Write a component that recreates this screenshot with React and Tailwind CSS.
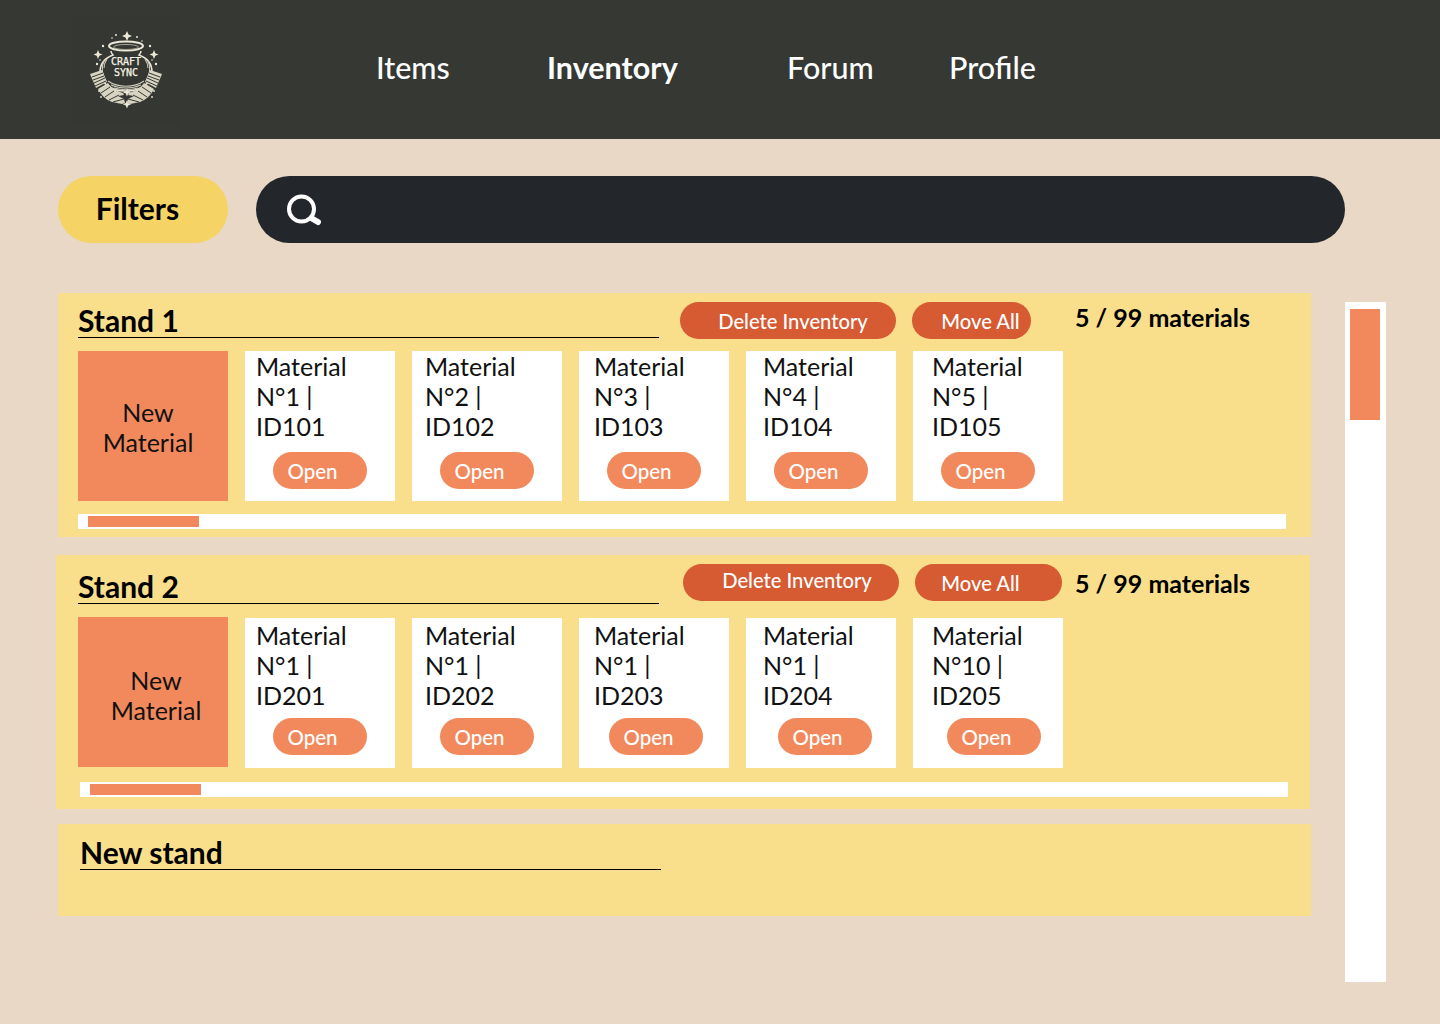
import React from 'react';

const Logo = () => (
  <div className="w-[108px] h-[110px] bg-[#353732]">
    <svg width="108" height="110" viewBox="0 0 108 110" fill="none">
      {/* stars */}
      <g fill="#ece8d8">
        <path d="M55 16l1.500 3.500 3.500 1.500-3.500 1.500-1.500 3.500-1.500-3.500-3.500-1.500 3.500-1.500z" />
        <path d="M26 35l1.300 3.200 3.200 1.300-3.200 1.300-1.300 3.200-1.300-3.200-3.200-1.300 3.200-1.300z" />
        <path d="M82 35l1.300 3.200 3.200 1.300-3.200 1.300-1.300 3.200-1.300-3.200-3.200-1.300 3.200-1.300z" />
        <path d="M55 73l1.200 3 3 1.200-3 1.200-1.200 3-1.200-3-3-1.200 3-1.200z" />
        <path d="M55 85l1.200 3 3 1.200-3 1.200-1.200 3-1.200-3-3-1.200 3-1.200z" />
        <circle cx="44" cy="20" r="1" /><circle cx="65" cy="22" r="1" /><circle cx="40" cy="23" r="0.800" />
        <circle cx="70" cy="26" r="0.800" /><circle cx="31" cy="31" r="1.200" /><circle cx="78" cy="31" r="1.200" />
        <circle cx="25" cy="49" r="1.200" /><circle cx="84" cy="49" r="1.200" /><circle cx="28" cy="45" r="0.800" />
        <circle cx="80" cy="45" r="0.800" /><circle cx="27" cy="76" r="0.900" /><circle cx="29" cy="82" r="0.900" />
        <circle cx="82" cy="76" r="0.900" /><circle cx="80" cy="82" r="0.900" />
      </g>
      {/* pot */}
      <ellipse cx="54" cy="31" rx="17" ry="4.500" stroke="#ece8d8" strokeWidth="2" />
      <ellipse cx="54" cy="32" rx="12.500" ry="2.500" stroke="#a8a597" strokeWidth="1" />
      <path d="M39 36c0 2 1 3 2 4-8 3-13 9-13 17 0 11 11 19 26 19s26-8 26-19c0-8-5-14-13-17 1-1 2-2 2-4" stroke="#ece8d8" strokeWidth="1.500" />
      <path d="M32 46c-3 6-2 15 2 20M35 44c-2 3-3 6-3 9M76 46c3 6 2 15-2 20M73 44c2 3 3 6 3 9M36 66c10 7 26 7 36 0M39 70c9 4 21 4 30 0M42 73c7 2 17 2 24 0" stroke="#cfcbbc" strokeWidth="1.100" />
      <text x="54" y="50" textAnchor="middle" fontFamily="'DejaVu Sans Mono', monospace" fontSize="10" fill="#f8f4e6" stroke="#f8f4e6" strokeWidth="0.250">CRAFT</text>
      <text x="54" y="61" textAnchor="middle" fontFamily="'DejaVu Sans Mono', monospace" fontSize="10" fill="#f8f4e6" stroke="#f8f4e6" strokeWidth="0.250">SYNC</text>
      {/* hands */}
      <g fill="#d8d4c2">
        <path d="M18 59l12-4 5 12-11 6z" />
        <path d="M90 59l-12-4-5 12 11 6z" />
        <path d="M26 74l10-6c3 5 9 8 15 10l1 2-6 1 6 3 1 4-3 1-10-2c-6-2-11-7-14-13z" />
        <path d="M82 74l-10-6c-3 5-9 8-15 10l-1 2 6 1-6 3-1 4 3 1 10-2c6-2 11-7 14-13z" />
      </g>
      <g stroke="#353732" strokeWidth="1">
        <path d="M20 62l11-4M21 65l11-4M22 68l11-5M23 71l11-5" />
        <path d="M88 62l-11-4M87 65l-11-4M86 68l-11-5M85 71l-11-5" />
        <path d="M29 78l9-6M33 82l9-6M37 85l10-5M41 87l11-3" />
        <path d="M79 78l-9-6M75 82l-9-6M71 85l-10-5M67 87l-11-3" />
      </g>
    </svg>
  </div>
);

const SearchIcon = () => (
  <svg width="36" height="32" viewBox="0 0 36 32" fill="none" stroke="white">
    <circle cx="16.500" cy="15" r="12.500" strokeWidth="4" />
    <path d="M27 24.500l6 3.500" strokeWidth="6" strokeLinecap="round" />
  </svg>
);

const MaterialCard = ({ n, id, pad, top, openMl }) => (
  <div className={`w-[150px] h-[150px] bg-white ${pad} ${top} text-[25px] leading-[30px] text-[#111111]`}>
    <p>Material</p>
    <p>N°{n} |</p>
    <p>{id}</p>
    <button className={`${openMl} block w-[94px] h-[37px] rounded-full bg-[#F2895C] text-white text-[20.500px] font-medium pr-[15px]`}>Open</button>
  </div>
);

const StandHeader = ({ title, children }) => (
  <div className="flex">
    <h2 className="w-[581px] h-[33px] border-b border-black text-[30px] leading-[30px] font-bold text-black whitespace-nowrap">{title}</h2>
    {children}
  </div>
);

const Pill = ({ className, children }) => (
  <button className={`h-[37px] rounded-full bg-[#D65A32] text-white text-[20.200px] font-medium ${className}`}>{children}</button>
);

const count = <span className="text-[25px] font-bold leading-[32px] text-black whitespace-nowrap">5 / 99 materials</span>;

const stand1 = [
  { n: 1, id: 'ID101', pad: 'pl-[11px]', top: 'pt-0 [&>button]:mt-[11px]', openMl: 'ml-[17px]' },
  { n: 2, id: 'ID102', pad: 'pl-[13px]', top: 'pt-0 [&>button]:mt-[11px]', openMl: 'ml-[15px]' },
  { n: 3, id: 'ID103', pad: 'pl-[15px]', top: 'pt-0 [&>button]:mt-[11px]', openMl: 'ml-[13px]' },
  { n: 4, id: 'ID104', pad: 'pl-[17px]', top: 'pt-0 [&>button]:mt-[11px]', openMl: 'ml-[11px]' },
  { n: 5, id: 'ID105', pad: 'pl-[19px]', top: 'pt-0 [&>button]:mt-[11px]', openMl: 'ml-[9px]' },
];

const stand2 = [
  { n: 1, id: 'ID201', pad: 'pl-[11px]', top: 'pt-[2px] [&>button]:mt-[8px]', openMl: 'ml-[17px]' },
  { n: 1, id: 'ID202', pad: 'pl-[13px]', top: 'pt-[2px] [&>button]:mt-[8px]', openMl: 'ml-[15px]' },
  { n: 1, id: 'ID203', pad: 'pl-[15px]', top: 'pt-[2px] [&>button]:mt-[8px]', openMl: 'ml-[15px]' },
  { n: 1, id: 'ID204', pad: 'pl-[17px]', top: 'pt-[2px] [&>button]:mt-[8px]', openMl: 'ml-[15px]' },
  { n: 10, id: 'ID205', pad: 'pl-[19px]', top: 'pt-[2px] [&>button]:mt-[8px]', openMl: 'ml-[15px]' },
];

export default function App() {
  return (
    <div className="w-[1440px] h-[1024px] overflow-hidden bg-[#E9D8C6] font-['Lato','Liberation_Sans',sans-serif]">
      <header className="h-[139px] bg-[#363833] flex items-center pl-[72px] text-white text-[30.500px] font-medium">
        <Logo />
        <nav className="flex items-center ml-[196px] pb-[4px]">
          <a className="w-[171px]">Items</a>
          <a className="w-[240px] font-bold">Inventory</a>
          <a className="w-[162px]">Forum</a>
          <a>Profile</a>
        </nav>
      </header>

      <div className="flex mt-[37px] ml-[58px] gap-[28px]">
        <button className="w-[170px] h-[67px] rounded-full bg-[#F6D365] text-[30px] font-bold text-black pr-[11px] pb-[2px]">Filters</button>
        <div className="w-[1089px] h-[67px] rounded-full bg-[#23262B] flex items-center pl-[29px]">
          <SearchIcon />
        </div>
      </div>

      <div className="flex">
        <main className="w-[1345px] shrink-0">
          <section className="mt-[50px] ml-[58px] w-[1253px] h-[244px] bg-[#F9DF8C] pl-[20px] pt-[12px]">
            <StandHeader title="Stand 1">
              <Pill className="ml-[21px] -mt-[3px] w-[216px] pl-[10px] pt-[2px]">Delete Inventory</Pill>
              <Pill className="ml-[16px] -mt-[3px] w-[119px] pl-[18px] pt-[2px]">Move All</Pill>
              <div className="ml-[44px] -mt-[4px]">{count}</div>
            </StandHeader>
            <div className="flex gap-[17px] mt-[12px]">
              <div className="w-[150px] h-[150px] bg-[#F2895C] flex items-center justify-center text-center text-[25px] leading-[30px] text-[#111111] pr-[10px] pt-[2px]">New<br />Material</div>
              {stand1.map((m) => <MaterialCard key={m.id} {...m} />)}
            </div>
            <div className="mt-[13px] w-[1208px] h-[15px] bg-white pl-[10px] pt-[2px]">
              <div className="w-[111px] h-[11px] bg-[#F2895C]" />
            </div>
          </section>

          <section className="mt-[18px] ml-[56px] w-[1254px] h-[254px] bg-[#F9DF8C] pl-[22px] pt-[16px]">
            <StandHeader title="Stand 2">
              <Pill className="ml-[24px] -mt-[7px] w-[216px] pl-[12px] pb-[4px]">Delete Inventory</Pill>
              <Pill className="ml-[16px] -mt-[7px] w-[147px] pr-[16px] pt-[2px]">Move All</Pill>
              <div className="ml-[13px] -mt-[4px]">{count}</div>
            </StandHeader>
            <div className="flex gap-[17px] mt-[13px]">
              <div className="w-[150px] h-[150px] bg-[#F2895C] flex items-center justify-center text-center text-[25px] leading-[30px] text-[#111111] pl-[6px] pt-[6px]">New<br />Material</div>
              <div className="flex gap-[17px] mt-[1px]">
                {stand2.map((m) => <MaterialCard key={m.id} {...m} />)}
              </div>
            </div>
            <div className="mt-[14px] ml-[2px] w-[1208px] h-[15px] bg-white pl-[10px] pt-[2px]">
              <div className="w-[111px] h-[11px] bg-[#F2895C]" />
            </div>
          </section>

          <section className="mt-[15px] ml-[58px] w-[1253px] h-[92px] bg-[#F9DF8C] pl-[22px] pt-[13px]">
            <h2 className="w-[581px] h-[33px] border-b border-black text-[30px] leading-[30px] font-bold text-black">New stand</h2>
          </section>
        </main>
        <aside className="mt-[59px] w-[41px] h-[680px] bg-white pl-[5px] pt-[7px]">
          <div className="w-[30px] h-[111px] bg-[#F2895C]" />
        </aside>
      </div>
    </div>
  );
}
